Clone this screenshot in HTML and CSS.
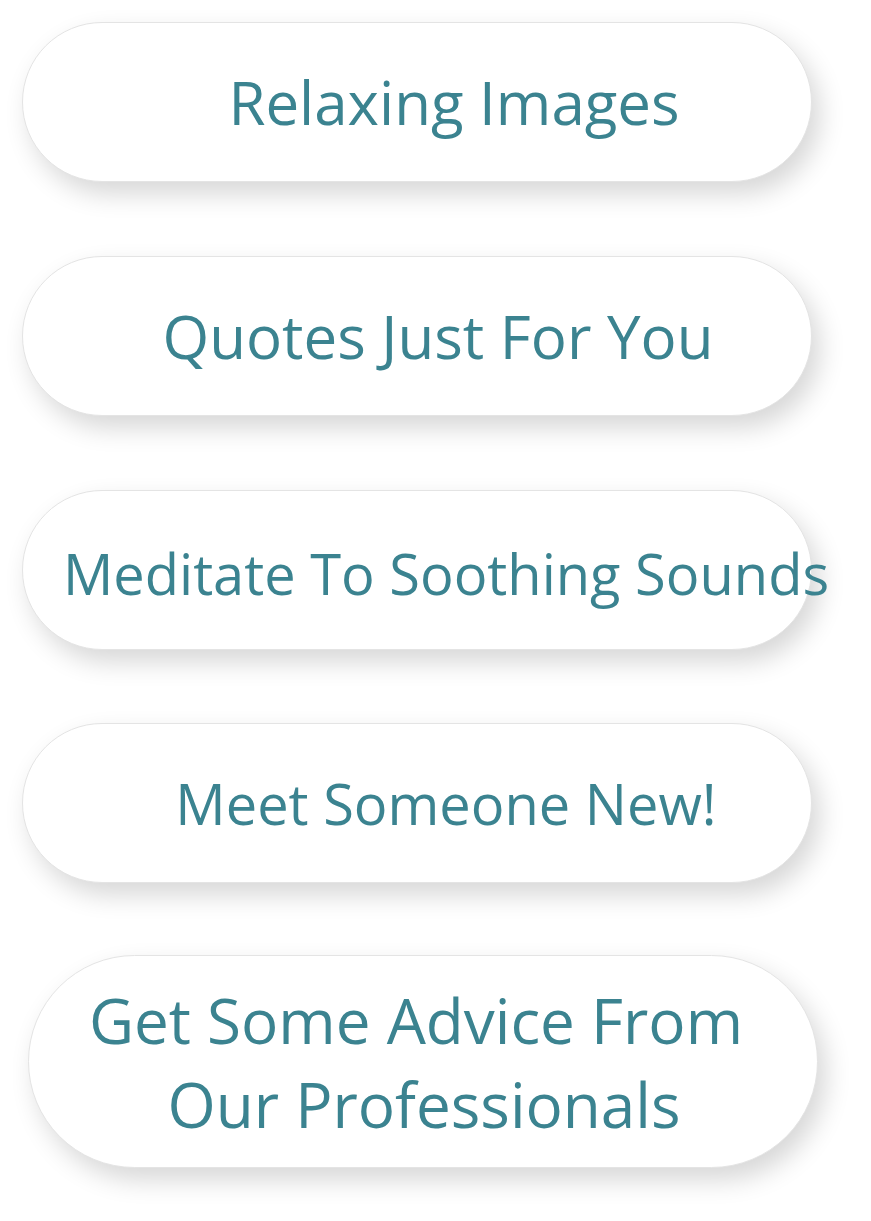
FILE: index.html
```html
<!DOCTYPE html>
<html lang="en">
<head>
<meta charset="utf-8">
<title>Menu</title>
<link rel="stylesheet" href="styles.css">
</head>
<body>
<main class="menu">
  <a class="pill pill-relax" href="#"><span class="label">Relaxing Images</span></a>
  <a class="pill pill-quotes" href="#"><span class="label">Quotes Just For You</span></a>
  <a class="pill pill-low" href="#"><span class="label label-sm">Meditate To Soothing Sounds</span></a>
  <a class="pill pill-tight" href="#"><span class="label label-sm">Meet Someone New!</span></a>
  <a class="pill pill-tall" href="#">
    <span class="label label-lg label-stack">
      <span class="line line-first">Get Some Advice From</span>
      <span class="line line-second">Our Professionals</span>
    </span>
  </a>
</main>
</body>
</html>
```

FILE: styles.css
```css
html, body {
  margin: 0;
  padding: 0;
  background: #ffffff;
}

body {
  font-family: "Open Sans", "Noto Sans", sans-serif;
  width: 871px;
  min-height: 1221px;
  overflow: hidden;
}

.menu {
  display: flex;
  flex-direction: column;
  align-items: flex-start;
  gap: 74px;
  padding: 22px 0 0 22px;
}

.pill {
  box-sizing: border-box;
  width: 790px;
  height: 160px;
  border-radius: 9999px;
  background: #ffffff;
  border: 1px solid #e4e4e4;
  box-shadow: 8px 12px 26px rgba(0, 0, 0, 0.16);
  display: flex;
  align-items: center;
  justify-content: center;
  padding-left: 58px;
  text-decoration: none;
  color: #3b8390;
}

.pill-relax {
  padding-left: 74px;
}

.pill-quotes {
  padding-left: 42px;
}

.pill-low {
  padding-top: 6px;
}

.pill-tight {
  margin-top: -1px;
}

.label {
  font-size: 60px;
  line-height: 84px;
  white-space: nowrap;
  flex-shrink: 0;
}

.label-sm {
  font-size: 56px;
}

.label-lg {
  font-size: 62px;
}

.pill-tall {
  height: 213px;
  margin-top: -2px;
  margin-left: 6px;
  padding-left: 0;
}

.label-stack {
  display: flex;
  flex-direction: column;
  align-items: center;
}

.line {
  display: block;
}

.line-first {
  padding-right: 14px;
}

.line-second {
  padding-left: 2px;
}
```
